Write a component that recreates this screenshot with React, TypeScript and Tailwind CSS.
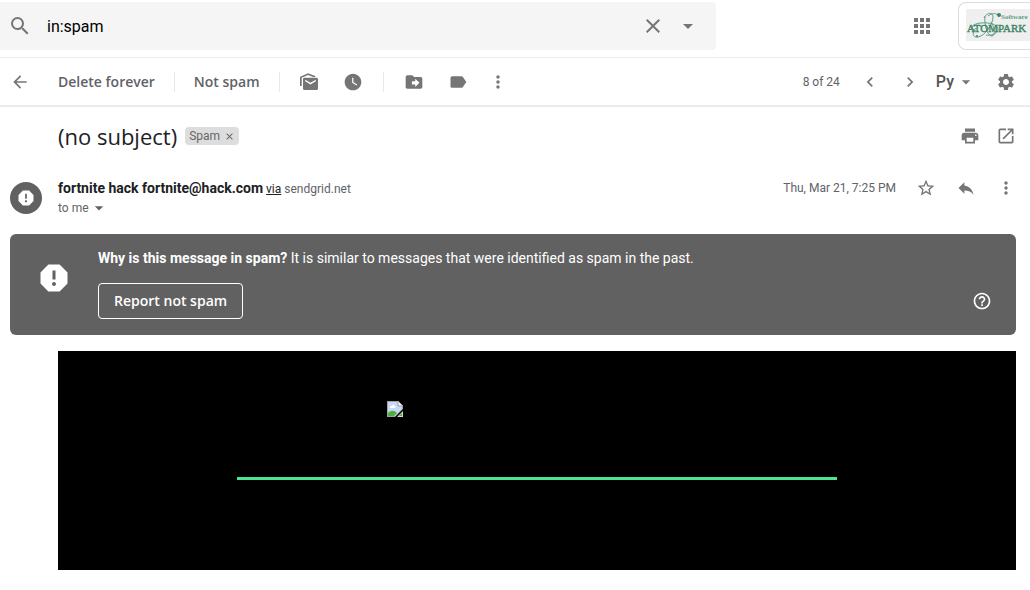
import React from "react";
import {
  MdApps,
  MdArrowBack,
  MdArrowDropDown,
  MdChevronLeft,
  MdChevronRight,
  MdClose,
  MdHelpOutline,
  MdLabel,
  MdMoreVert,
  MdOpenInNew,
  MdPrint,
  MdReply,
  MdReport,
  MdSearch,
  MdSettings,
  MdStarBorder,
  MdWatchLater,
} from "react-icons/md";

type IconButtonProps = {
  label: string;
  className?: string;
  children: React.ReactNode;
};

function IconButton({ label, className = "w-5", children }: IconButtonProps) {
  return (
    <button
      type="button"
      aria-label={label}
      className={"flex shrink-0 items-center justify-center text-[#757575] " + className}
    >
      {children}
    </button>
  );
}

function Divider() {
  return <div className="h-5 w-px shrink-0 bg-[#e8e8e8]" />;
}

function MarkUnreadIcon() {
  return (
    <svg viewBox="0 0 20 20" width="20" height="20" fill="currentColor" aria-hidden="true">
      <path d="M1 14V6C1 5.300 1.300 4.900 1.900 4.600L9 1.200l7.200 2.800v1.100h-2L9 3 2.700 5.800V14z" />
      <path
        fillRule="evenodd"
        d="M5.500 5.700h12c.9 0 1.500.6 1.500 1.500v9.300c0 .9-.6 1.500-1.500 1.500h-12c-.9 0-1.500-.6-1.500-1.500V7.200c0-.9.6-1.500 1.500-1.500zm.7 2v1.600l5.300 3.200 5.300-3.200V7.700l-5.300 3z"
      />
    </svg>
  );
}

function MoveToIcon() {
  return (
    <svg viewBox="0 0 24 24" width="20" height="20" fill="currentColor" aria-hidden="true">
      <path
        fillRule="evenodd"
        d="M20 6h-8l-2-2H4c-1.100 0-2 .9-2 2v12c0 1.100.9 2 2 2h16c1.100 0 2-.9 2-2V8c0-1.100-.9-2-2-2zm-6.500 12v-3h-4v-4h4V8l5 5-5 5z"
      />
    </svg>
  );
}

function BrokenImageIcon() {
  return (
    <svg viewBox="0 0 16 16" width="16" height="16" role="img" aria-label="Image not loaded">
      <path d="M0 0h11l5 5v3L8 16H0z" fill="#a3a3a3" />
      <path d="M1 1h10v4h4v3l-7 7H1z" fill="#c4d9f8" />
      <path d="M11 0v5h5z" fill="#f3f3f3" stroke="#a3a3a3" />
      <path d="M3 6c0-1 1-1.500 2-1 0-2 3-1.500 2.500 0C9 5 9 7 8 7H4C3 7 3 6.500 3 6z" fill="#fff" />
      <path d="M1 15v-3c3-3 6-3 9 0l-3 3z" fill="#4caf3a" />
      <path d="M16 10v6h-6z" fill="#d9d9d9" />
      <path d="M15 12v3h-3z" fill="#4caf3a" />
    </svg>
  );
}

function AccountLogo() {
  return (
    <svg viewBox="0 0 64 32" width="64" height="32" role="img" aria-label="AtomPark Software">
      <rect width="64" height="32" fill="#efefef" />
      <g fill="none" stroke="#5f9e82" strokeWidth="1">
        <path d="M18 9C21 3 27 3 27 8c0 7-8 19-15 20-6 1-6-5-2-9" />
        <path d="M10 22c-7-2-5-7 5-8 9-1 18 2 17 7-1 4-8 6-12 5" />
        <path d="M19 7c-1 9 2 18 6 20 5 1 4-8 0-14" />
        <path d="M22 7c4-3 7-3 10-1" />
      </g>
      <circle cx="33" cy="6" r="2" fill="#3d8465" />
      <circle cx="11" cy="27" r="1" fill="#3d8465" />
      <text x="35" y="10" fontSize="7" fontWeight="700" fontFamily="Liberation Serif, serif" fill="#5f9e82">
        Software
      </text>
      <text
        x="1"
        y="23"
        fontSize="11"
        fontFamily="Liberation Serif, serif"
        fill="#3d8465"
        stroke="#3d8465"
        strokeWidth="0.4"
      >
        ATOMPARK
      </text>
    </svg>
  );
}

function Header() {
  return (
    <header className="flex justify-between border-b border-[#ebebeb] pt-0.5 pb-[7px]">
      <form className="flex h-12 w-[716px] items-center rounded-r bg-[#f5f5f5] pr-4 pl-2">
        <IconButton label="Search" className="w-6">
          <MdSearch size={24} />
        </IconButton>
        <input
          type="text"
          aria-label="Search mail"
          defaultValue="in:spam"
          className="ml-[15px] min-w-0 flex-1 bg-transparent pt-0.5 text-base text-black outline-none"
        />
        <div className="flex gap-[11px]">
          <IconButton label="Clear search" className="w-6">
            <MdClose size={24} />
          </IconButton>
          <IconButton label="Search options" className="w-6">
            <MdArrowDropDown size={24} />
          </IconButton>
        </div>
      </form>
      <div className="flex items-center gap-6">
        <IconButton label="Apps" className="w-6">
          <MdApps size={24} />
        </IconButton>
        <a
          href="#account"
          className="flex h-12 items-start rounded-l-lg border border-r-0 border-[#dadce0] pt-1.5 pl-[7px]"
        >
          <AccountLogo />
        </a>
      </div>
    </header>
  );
}

function Toolbar() {
  return (
    <nav className="flex h-[49px] items-center justify-between border-b-2 border-[#ebebeb] pr-3.5 pl-2.5">
      <div className="flex items-center">
        <IconButton label="Back to spam">
          <MdArrowBack size={20} />
        </IconButton>
        <button type="button" className="ml-7 font-['Open_Sans'] text-sm font-semibold text-[#5f6368]">
          Delete forever
        </button>
        <div className="flex items-center gap-[19px] pl-[19px]">
          <Divider />
          <button type="button" className="font-['Open_Sans'] text-sm font-semibold text-[#5f6368]">
            Not spam
          </button>
          <Divider />
          <IconButton label="Mark as unread">
            <MarkUnreadIcon />
          </IconButton>
        </div>
        <div className="flex items-center gap-5 pl-6">
          <IconButton label="Snooze">
            <MdWatchLater size={20} />
          </IconButton>
          <Divider />
          <IconButton label="Move to">
            <MoveToIcon />
          </IconButton>
        </div>
        <div className="flex items-center gap-5 pl-6">
          <IconButton label="Labels">
            <MdLabel size={20} />
          </IconButton>
          <IconButton label="More">
            <MdMoreVert size={20} />
          </IconButton>
        </div>
      </div>
      <div className="flex items-center">
        <span className="text-xs text-[#5f6368]">8 of 24</span>
        <div className="flex gap-5 pl-5">
          <IconButton label="Newer">
            <MdChevronLeft size={20} />
          </IconButton>
          <IconButton label="Older">
            <MdChevronRight size={20} />
          </IconButton>
        </div>
        <button type="button" className="ml-4 flex items-center text-base font-medium text-[#555]">
          Py
          <MdArrowDropDown size={20} className="ml-0.5 text-[#757575]" />
        </button>
        <IconButton label="Settings" className="ml-5 w-5">
          <MdSettings size={20} />
        </IconButton>
      </div>
    </nav>
  );
}

function Message() {
  return (
    <main className="pr-3.5 pl-2.5">
      <div className="flex items-center justify-between pt-[13px] pl-12">
        <div className="flex items-center gap-2">
          <h1 className="font-['Open_Sans'] text-[22px] leading-8 text-[#202124]">(no subject)</h1>
          <span className="flex h-[18px] items-center gap-1 rounded bg-[#ddd] px-1 text-xs text-[#666]">
            Spam
            <button type="button" aria-label="Remove label Spam">
              <MdClose size={11} />
            </button>
          </span>
        </div>
        <div className="flex gap-4">
          <IconButton label="Print">
            <MdPrint size={20} />
          </IconButton>
          <IconButton label="Open in new window">
            <MdOpenInNew size={20} />
          </IconButton>
        </div>
      </div>

      <div className="flex pt-[26px]">
        <div className="mt-1 flex h-8 w-8 shrink-0 items-center justify-center rounded-full bg-[#616161] text-white">
          <MdReport size={20} />
        </div>
        <div className="min-w-0 flex-1 pl-4">
          <div className="flex h-5 items-center justify-between">
            <p className="text-xs leading-5 text-[#5f6368]">
              <strong className="text-sm font-bold text-[#202124]">fortnite hack fortnite@hack.com</strong>{" "}
              <a href="#via" className="text-[#222] underline">
                via
              </a>{" "}
              sendgrid.net
            </p>
            <div className="flex items-center gap-5">
              <span className="text-xs text-[#5f6368]">Thu, Mar 21, 7:25 PM</span>
              <IconButton label="Star">
                <MdStarBorder size={20} />
              </IconButton>
              <IconButton label="Reply">
                <MdReply size={20} />
              </IconButton>
              <IconButton label="More">
                <MdMoreVert size={20} />
              </IconButton>
            </div>
          </div>
          <button type="button" className="flex h-5 items-center text-xs text-[#5f6368]">
            to me
            <MdArrowDropDown size={20} />
          </button>
        </div>
      </div>

      <section className="mt-4 flex rounded-md bg-[#616161] pt-3.5 pr-6 pb-4 text-white">
        <div className="flex w-[88px] shrink-0 justify-center pt-3">
          <MdReport size={36} />
        </div>
        <div className="flex-1">
          <p className="text-sm leading-5">
            <strong className="font-bold">Why is this message in spam?</strong> It is similar to messages that were
            identified as spam in the past.
          </p>
          <div className="flex items-center justify-between pt-[15px]">
            <button
              type="button"
              className="h-9 rounded border border-white px-[15px] font-['Open_Sans'] text-sm font-semibold"
            >
              Report not spam
            </button>
            <button type="button" aria-label="Help">
              <MdHelpOutline size={20} />
            </button>
          </div>
        </div>
      </section>

      <article className="mt-4 ml-12 bg-black pt-[50px] pb-[90px]">
        <div className="mx-auto max-w-[600px] border-b-[3px] border-[#4ae694] pb-[60px] pl-[150px]">
          <BrokenImageIcon />
        </div>
      </article>
    </main>
  );
}

export default function App() {
  return (
    <div className="min-h-screen overflow-x-hidden bg-white font-[Roboto,sans-serif]">
      <Header />
      <Toolbar />
      <Message />
    </div>
  );
}
